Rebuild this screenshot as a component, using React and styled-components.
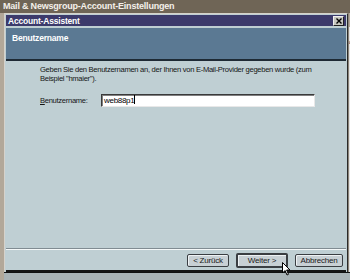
import styled, { createGlobalStyle } from "styled-components"

const GlobalStyle = createGlobalStyle`
  html, body {
    margin: 0;
    padding: 0;
    background: #b2a899;
    font-family: "Liberation Sans", Arial, sans-serif;
  }
`

const Screen = styled.div`
  position: relative;
  width: 350px;
  height: 280px;
  display: flex;
  flex-direction: column;
  overflow: hidden;
  background: #b2a899;
`

const OuterTitle = styled.div`
  height: 13px;
  flex: none;
  background: #6f6556;
  color: #f4f0ea;
  font-size: 9px;
  font-weight: bold;
  line-height: 12px;
  padding-left: 3px;
  letter-spacing: -0.2px;
  white-space: nowrap;
`

const OuterBody = styled.div`
  flex: 1;
  display: flex;
  padding-left: 4px;
  min-height: 0;
`

const SideStrip = styled.div`
  flex: 1;
  border-left: 1px solid #8d8578;
  background: linear-gradient(#b2a899 0 14px, #e4e4e4 14px);
  font-size: 5px;
  color: #222;
  padding-top: 26px;
  overflow: hidden;
`

const BottomStrip = styled.div`
  height: 7px;
  flex: none;
  border-top: 1px solid #111;
  background: #a9b3b6;
  margin-left: 4px;
`

const Dialog = styled.div`
  width: 340px;
  display: flex;
  flex-direction: column;
  background: #bfcfd3;
  border-top: 1px solid #d6d2ca;
  border-left: 1px solid #d6d2ca;
  border-right: 1px solid #2a2a2a;
  padding: 1px 1px 0 1px;
`

const TitleBar = styled.div`
  height: 11px;
  flex: none;
  display: flex;
  align-items: center;
  justify-content: space-between;
  background: #3c3a6b;
  color: #fff;
  font-size: 8.5px;
  font-weight: bold;
  padding: 0 2px 0 2px;
  letter-spacing: -0.2px;
`

const CloseButton = styled.div`
  width: 9px;
  height: 8px;
  display: flex;
  align-items: center;
  justify-content: center;
  background: #c8c8c0;
  border: 1px solid;
  border-color: #f0f0f0 #202020 #202020 #f0f0f0;
`

const Header = styled.div`
  height: 33px;
  flex: none;
  margin-top: 2px;
  background: #5b7993;
  border-bottom: 2px solid #1e2a34;
  color: #fff;
  font-size: 8.5px;
  font-weight: bold;
  padding: 5px 0 0 6px;
  box-sizing: border-box;
  letter-spacing: -0.2px;
`

const Content = styled.div`
  flex: 1;
  padding: 4px 26px 0 34px;
  font-size: 7.6px;
  color: #151515;
  letter-spacing: -0.3px;
`

const Intro = styled.p`
  margin: 0;
  line-height: 9px;
`

const FieldRow = styled.div`
  display: flex;
  align-items: center;
  margin-top: 11px;
  padding-right: 5px;
`

const Label = styled.label`
  width: 61px;
  flex: none;
  u {
    text-decoration: underline;
  }
`

const TextInput = styled.div`
  flex: 1;
  height: 11px;
  background: #fff;
  border: 1px solid;
  border-color: #3a3a3a #e8e8e8 #e8e8e8 #3a3a3a;
  box-shadow: inset 1px 1px 0 #808080;
  line-height: 11px;
  padding-left: 2px;
  color: #000;
  font-size: 8px;
`

const Caret = styled.span`
  display: inline-block;
  width: 1px;
  height: 9px;
  background: #000;
  vertical-align: -1px;
`

const Separator = styled.div`
  height: 1px;
  flex: none;
  background: #808c92;
  border-bottom: 1px solid #f4f8f8;
`

const ButtonRow = styled.div`
  height: 20px;
  flex: none;
  display: flex;
  justify-content: flex-end;
  align-items: center;
  gap: 7px;
  padding-right: 3px;
  border-bottom: 2px solid #151515;
`

const Button = styled.div`
  width: ${p => p.$w}px;
  height: 11px;
  display: flex;
  align-items: center;
  justify-content: center;
  font-size: 8px;
  letter-spacing: -0.2px;
  color: #1a1a1a;
  background: #c8d0d4;
  border: 1px solid #3a3e42;
  border-width: ${p => (p.$default ? "2px" : "1px")};
  border-radius: 2px;
  box-shadow: inset 1px 1px 0 #eef2f4;
`

const Cursor = styled.svg`
  position: absolute;
  left: 282px;
  top: 262px;
`

export default function App() {
  return (
    <>
      <GlobalStyle />
      <Screen>
        <OuterTitle>Mail &amp; Newsgroup-Account-Einstellungen</OuterTitle>
        <OuterBody>
          <Dialog>
            <TitleBar>
              <span>Account-Assistent</span>
              <CloseButton>
                <svg width="6" height="6" viewBox="0 0 6 6">
                  <path d="M0.5 0.5 L5.5 5.5 M5.5 0.5 L0.5 5.5" stroke="#000" strokeWidth="1.4" />
                </svg>
              </CloseButton>
            </TitleBar>
            <Header>Benutzername</Header>
            <Content>
              <Intro>
                Geben Sie den Benutzernamen an, der Ihnen von E-Mail-Provider gegeben wurde (zum
                Beispiel "hmaier").
              </Intro>
              <FieldRow>
                <Label><u>B</u>enutzername:</Label>
                <TextInput>web88p1<Caret /></TextInput>
              </FieldRow>
            </Content>
            <Separator />
            <ButtonRow>
              <Button $w={40}>&lt; Zurück</Button>
              <Button $w={48} $default>Weiter &gt;</Button>
              <Button $w={46}>Abbrechen</Button>
            </ButtonRow>
          </Dialog>
          <SideStrip>c</SideStrip>
        </OuterBody>
        <BottomStrip />
        <Cursor width="10" height="15" viewBox="0 0 10 15">
          <path d="M0.5 0.5 L0.5 11 L3 8.5 L5 13 L6.5 12.3 L4.6 8 L8 8 Z" fill="#fff" stroke="#000" strokeWidth="1" />
        </Cursor>
      </Screen>
    </>
  )
}
